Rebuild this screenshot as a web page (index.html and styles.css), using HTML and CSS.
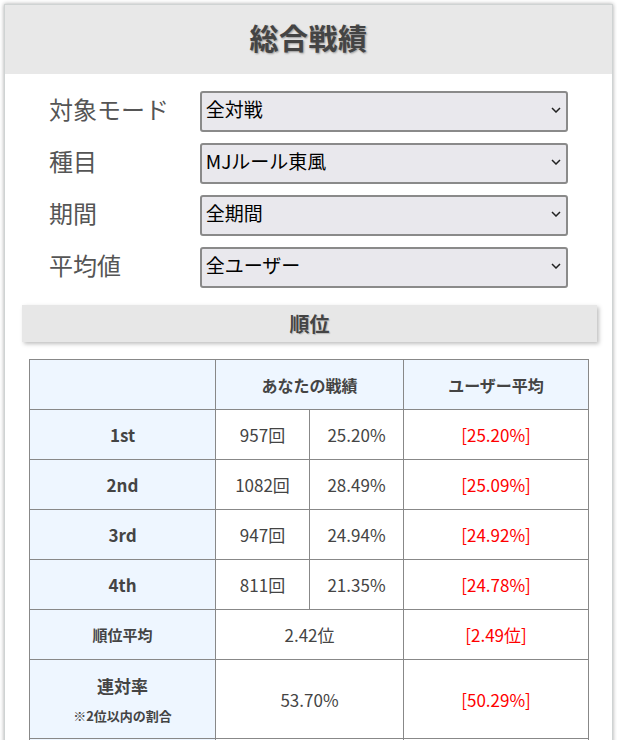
FILE: index.html
```html
<!DOCTYPE html>
<html lang="ja">
<head>
<meta charset="utf-8">
<title>総合戦績</title>
<link rel="stylesheet" href="styles.css">
</head>
<body>
<div class="card">
  <h1 class="title">総合戦績</h1>
  <div class="form">
    <div class="form-row">
      <label class="form-label">対象モード</label>
      <div class="select-wrap">
        <select class="select"><option>全対戦</option></select>
        <svg class="chev" width="10" height="6" viewBox="0 0 10 6"><path d="M1 1 L5 5 L9 1" fill="none" stroke="#222" stroke-width="1.5"/></svg>
      </div>
    </div>
    <div class="form-row">
      <label class="form-label">種目</label>
      <div class="select-wrap">
        <select class="select"><option>MJルール東風</option></select>
        <svg class="chev" width="10" height="6" viewBox="0 0 10 6"><path d="M1 1 L5 5 L9 1" fill="none" stroke="#222" stroke-width="1.5"/></svg>
      </div>
    </div>
    <div class="form-row">
      <label class="form-label">期間</label>
      <div class="select-wrap">
        <select class="select"><option>全期間</option></select>
        <svg class="chev" width="10" height="6" viewBox="0 0 10 6"><path d="M1 1 L5 5 L9 1" fill="none" stroke="#222" stroke-width="1.5"/></svg>
      </div>
    </div>
    <div class="form-row">
      <label class="form-label">平均値</label>
      <div class="select-wrap">
        <select class="select"><option>全ユーザー</option></select>
        <svg class="chev" width="10" height="6" viewBox="0 0 10 6"><path d="M1 1 L5 5 L9 1" fill="none" stroke="#222" stroke-width="1.5"/></svg>
      </div>
    </div>
  </div>
  <h2 class="section">順位</h2>
  <table class="stats">
    <colgroup>
      <col class="c1"><col class="c2"><col class="c3"><col class="c4">
    </colgroup>
    <tr class="head">
      <th></th>
      <th colspan="2">あなたの戦績</th>
      <th>ユーザー平均</th>
    </tr>
    <tr>
      <th class="rank">1st</th>
      <td>957回</td><td>25.20%</td><td class="avg">[25.20%]</td>
    </tr>
    <tr>
      <th class="rank">2nd</th>
      <td>1082回</td><td>28.49%</td><td class="avg">[25.09%]</td>
    </tr>
    <tr>
      <th class="rank">3rd</th>
      <td>947回</td><td>24.94%</td><td class="avg">[24.92%]</td>
    </tr>
    <tr>
      <th class="rank">4th</th>
      <td>811回</td><td>21.35%</td><td class="avg">[24.78%]</td>
    </tr>
    <tr>
      <th class="small">順位平均</th>
      <td colspan="2">2.42位</td><td class="avg">[2.49位]</td>
    </tr>
    <tr class="tall">
      <th class="rank">連対率<span class="note">※2位以内の割合</span></th>
      <td colspan="2">53.70%</td><td class="avg">[50.29%]</td>
    </tr>
    <tr>
      <th class="rank">&nbsp;</th>
      <td colspan="2">&nbsp;</td><td class="avg">&nbsp;</td>
    </tr>
  </table>
</div>
</body>
</html>
```

FILE: styles.css
```css
html, body {
  margin: 0;
  padding: 0;
  background: #fff;
  font-family: "Noto Sans CJK JP", "Noto Sans", sans-serif;
  color: #444;
}

.card {
  margin: 4px 4px 0 4px;
  border: 1px solid #cfd3d3;
  box-shadow: 0 0 4px rgba(0, 0, 0, 0.35);
  background: #fff;
  height: 760px;
  overflow: hidden;
}

.title {
  margin: 0;
  height: 69px;
  box-sizing: border-box;
  padding-bottom: 5px;
  background: #e8e8e8;
  display: flex;
  align-items: center;
  justify-content: center;
  font-size: 29px;
  font-weight: bold;
  color: #444;
  text-shadow: 1px 1px 2px rgba(0, 0, 0, 0.35);
  letter-spacing: 0.5px;
}

.form {
  display: flex;
  flex-direction: column;
  gap: 11px;
  padding: 17px 44px 0 44px;
}

.form-row {
  display: flex;
  align-items: center;
  height: 41px;
}

.form-label {
  width: 151px;
  font-size: 24px;
  color: #555;
  line-height: 1;
  margin-top: -6px;
}

.select-wrap {
  position: relative;
  width: 369px;
  height: 41px;
}

.select {
  appearance: none;
  -webkit-appearance: none;
  width: 100%;
  height: 100%;
  box-sizing: border-box;
  border: 2px solid #8a8a8a;
  border-radius: 3px;
  background: #e9e8ed;
  font-family: inherit;
  font-size: 19px;
  color: #000;
  padding: 0 0 6px 4px;
  margin: 0;
}

.chev {
  position: absolute;
  right: 7px;
  top: 16px;
  pointer-events: none;
}

.section {
  margin: 17px 15px 0 17px;
  height: 37px;
  background: #e7e7e7;
  box-shadow: 2px 2px 4px rgba(0, 0, 0, 0.25);
  display: flex;
  align-items: center;
  justify-content: center;
  font-size: 20px;
  font-weight: bold;
  color: #444;
  text-shadow: 1px 1px 1px rgba(0, 0, 0, 0.2);
}

.stats {
  margin: 17px 0 0 24px;
  width: 559px;
  border-collapse: collapse;
  table-layout: fixed;
}

.c1 { width: 186px; }
.c2 { width: 94px; }
.c3 { width: 94px; }
.c4 { width: 185px; }

.stats th,
.stats td {
  border: 1px solid #888;
  height: 49px;
  padding: 0;
  text-align: center;
  vertical-align: middle;
}

.stats th {
  background: #eef6ff;
  font-weight: bold;
  color: #444;
  font-size: 16px;
}

.head th {
  font-size: 16px;
}

.stats th.rank {
  font-size: 17px;
}

.stats th.small {
  font-size: 15px;
}

.stats td {
  font-size: 17px;
  color: #444;
  background: #fff;
}

.stats td.avg {
  color: #f00;
}

.tall th,
.tall td {
  height: 78px;
}

.note {
  display: block;
  font-size: 13px;
  margin-top: 8px;
}
```
